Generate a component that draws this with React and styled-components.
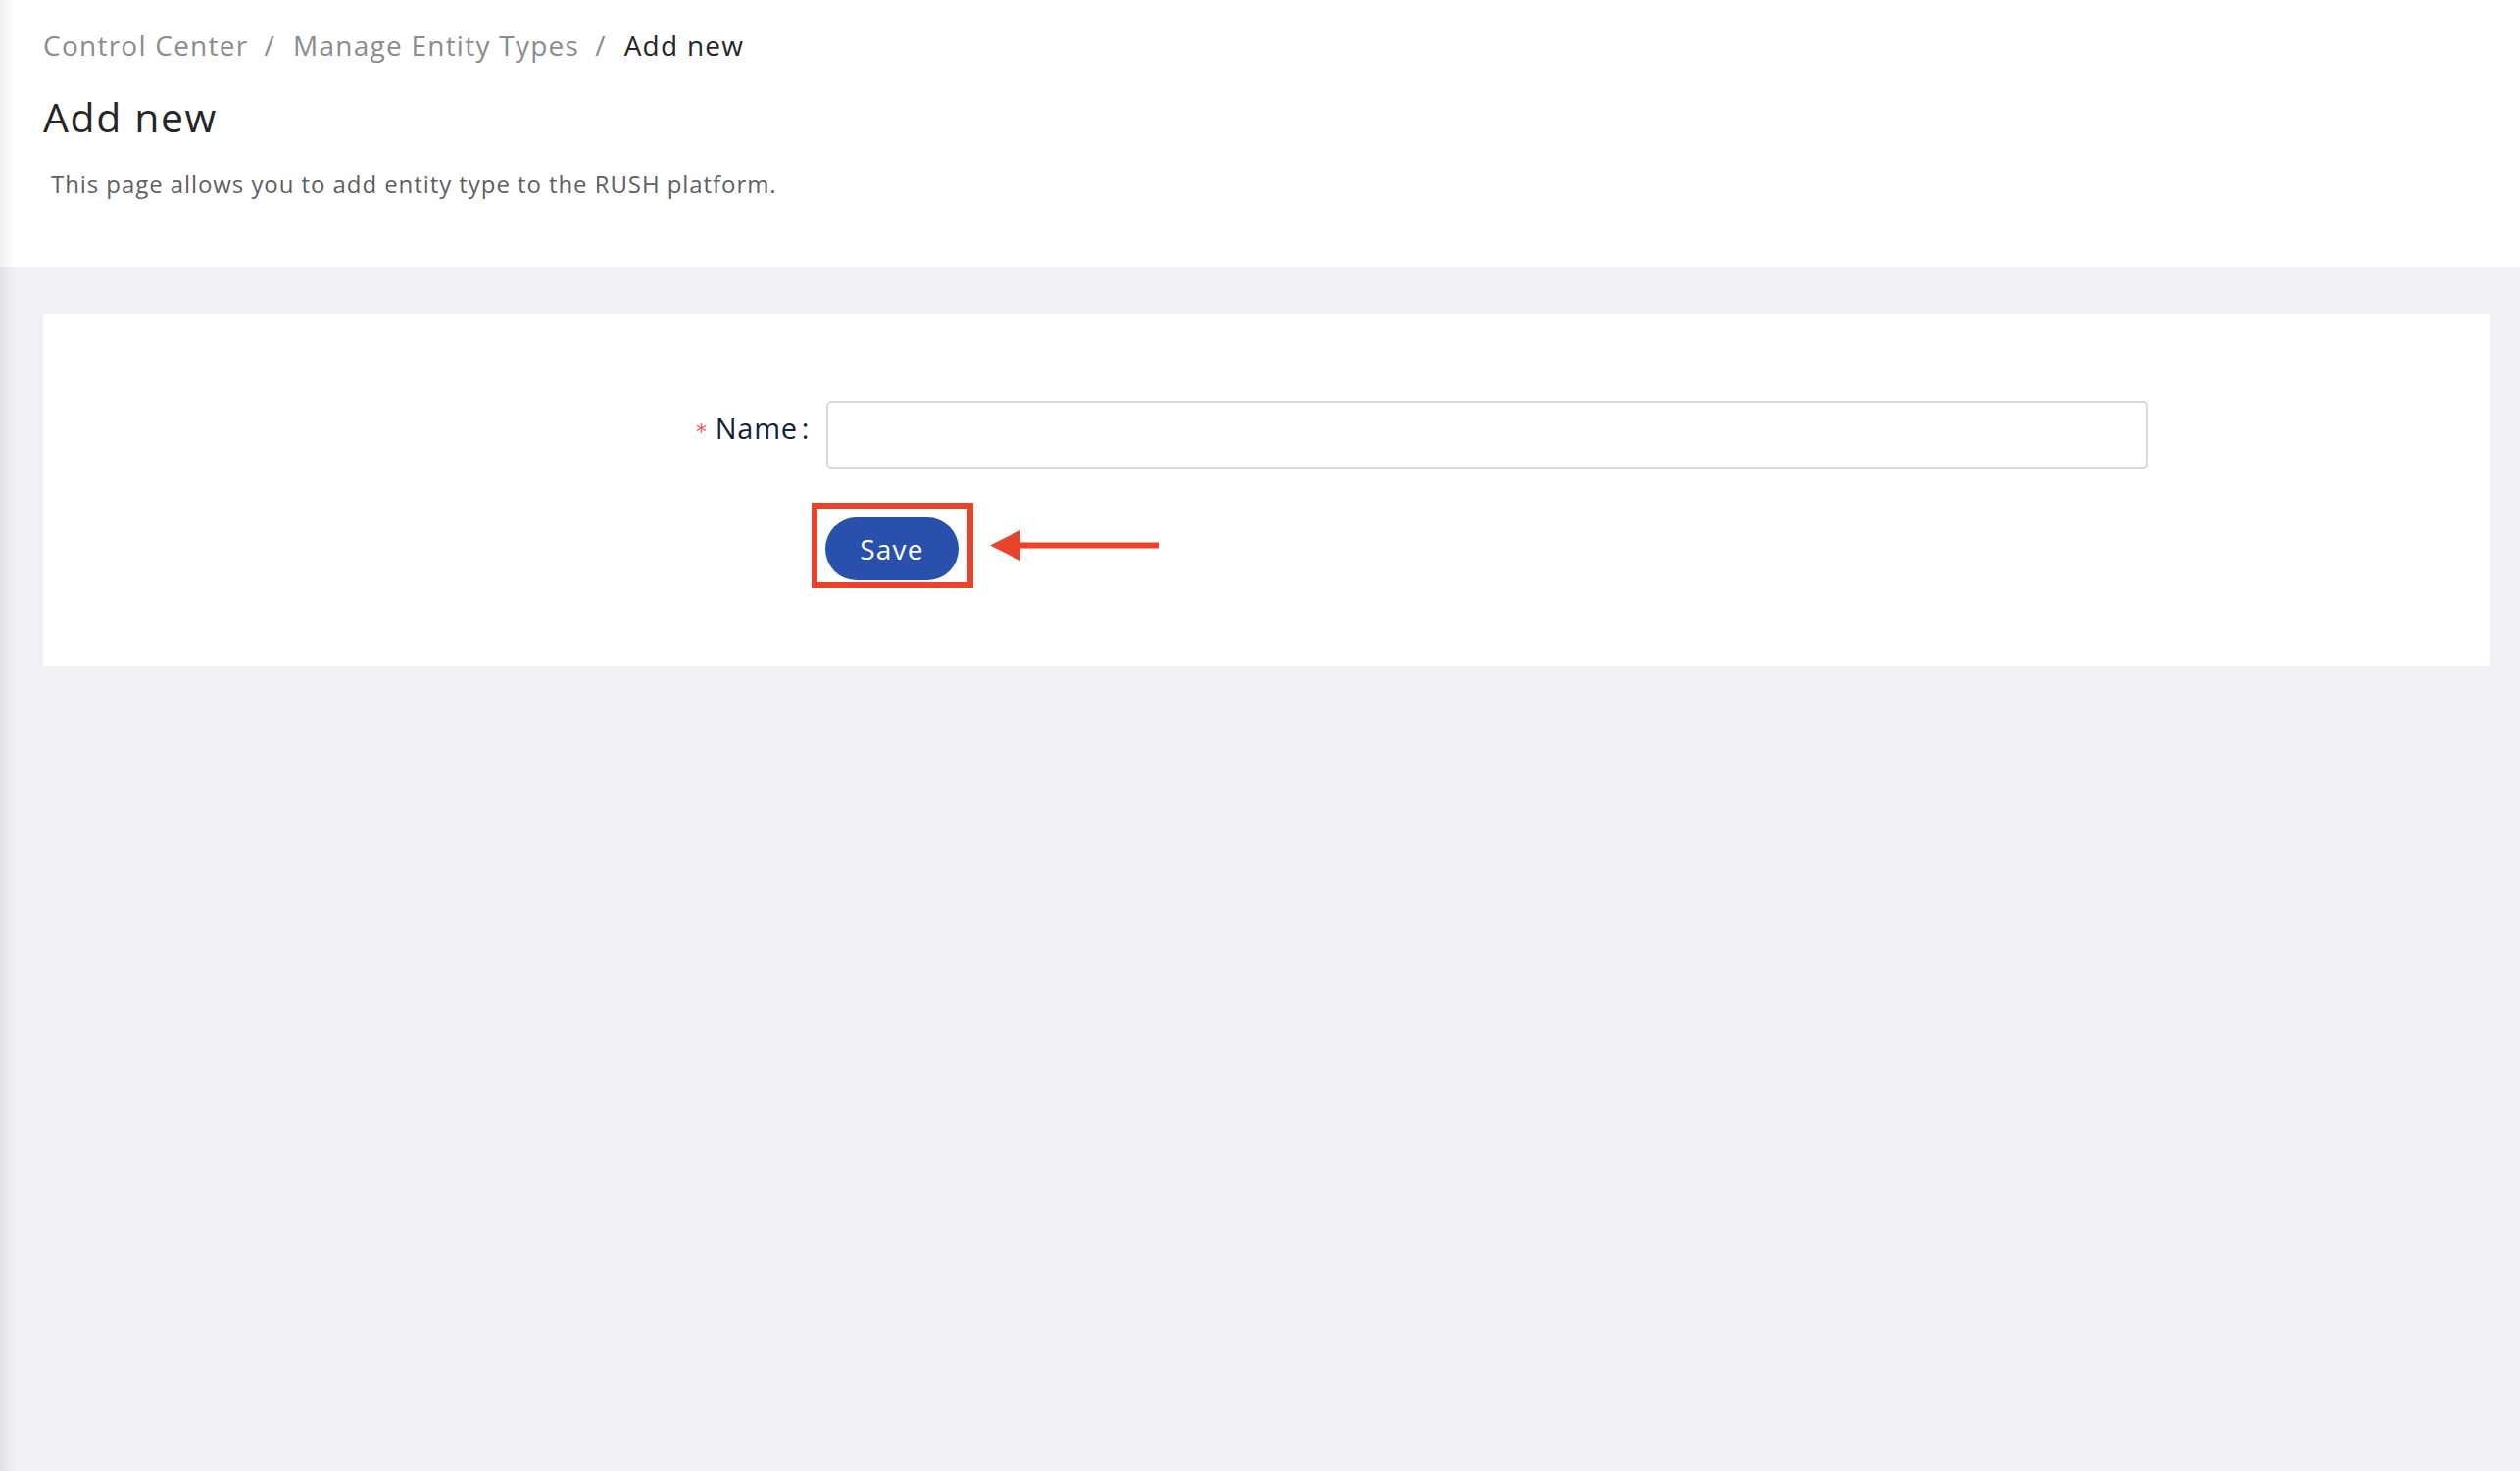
import React from "react";
import styled, { createGlobalStyle } from "styled-components";

const GlobalStyle = createGlobalStyle`
  html, body {
    margin: 0;
    padding: 0;
    background: #f0f1f5;
    font-family: "Open Sans", "Liberation Sans", sans-serif;
  }
  * { box-sizing: border-box; }
`;

const Page = styled.div`
  position: relative;
  min-height: 100vh;
  display: flex;
  flex-direction: column;
  background: #f0f1f5;

  &::after {
    content: "";
    position: absolute;
    left: 0;
    top: 0;
    bottom: 0;
    width: 14px;
    background: linear-gradient(to right, rgba(0, 0, 20, 0.06), rgba(0, 0, 20, 0));
    pointer-events: none;
  }
`;

const Header = styled.header`
  background: #ffffff;
  height: 272px;
  padding: 26px 44px 0 44px;
`;

const Breadcrumb = styled.nav`
  display: flex;
  align-items: center;
  font-size: 28px;
  line-height: 40px;
  letter-spacing: 1.25px;
  color: #8c8c8c;
`;

const Crumb = styled.span`
  color: ${(p) => (p.$current ? "#262626" : "#8c8c8c")};
`;

const Separator = styled.span`
  margin: 0 18px 0 16px;
  color: #8c8c8c;
`;

const Title = styled.h1`
  margin: 25px 0 0 0;
  font-size: 41px;
  line-height: 56px;
  font-weight: 500;
  letter-spacing: 1.6px;
  color: #262626;
`;

const Description = styled.p`
  margin: 24px 0 0 0;
  padding-left: 8px;
  font-size: 24px;
  line-height: 34px;
  letter-spacing: 0.93px;
  color: #5f5f5f;
`;

const Main = styled.main`
  padding: 48px 31px 0 44px;
`;

const Card = styled.section`
  background: #ffffff;
  height: 360px;
  padding-top: 89px;
`;

const FormRow = styled.div`
  display: flex;
  align-items: center;
`;

const Label = styled.label`
  width: 799px;
  padding: 0 17px 10px 0;
  display: flex;
  justify-content: flex-end;
  align-items: baseline;
  font-size: 29px;
  line-height: 40px;
  letter-spacing: 0.7px;
  color: #14213d;
`;

const Required = styled.span`
  color: #ff4d4f;
  font-size: 22px;
  margin-right: 8px;
  font-family: "DejaVu Sans", sans-serif;
`;

const Colon = styled.span`
  margin-left: 4px;
`;

const Input = styled.input`
  width: 1348px;
  height: 70px;
  border: 2px solid #d9d9d9;
  border-radius: 5px;
  background: #fff;
  font-size: 26px;
  padding: 0 18px;
  font-family: inherit;
  outline: none;
`;

const ActionRow = styled.div`
  display: flex;
  align-items: center;
  margin-top: 34px;
  padding-left: 784px;
`;

const Highlight = styled.div`
  border: 6px solid #e9432a;
  padding: 9px 9px 2px 8px;
  display: flex;
`;

const SaveButton = styled.button`
  width: 136px;
  height: 64px;
  border: none;
  border-radius: 32px;
  background: #2a50ad;
  color: #ffffff;
  font-family: inherit;
  font-size: 28px;
  line-height: 1;
  letter-spacing: 1.2px;
  box-shadow: 0 2px 0 rgba(0, 0, 0, 0.04);
  cursor: pointer;
`;

const Arrow = styled.svg`
  margin-left: 17px;
  display: block;
`;

export default function App() {
  return (
    <>
      <GlobalStyle />
      <Page>
        <Header>
          <Breadcrumb>
            <Crumb>Control Center</Crumb>
            <Separator>/</Separator>
            <Crumb>Manage Entity Types</Crumb>
            <Separator>/</Separator>
            <Crumb $current>Add new</Crumb>
          </Breadcrumb>
          <Title>Add new</Title>
          <Description>
            This page allows you to add entity type to the RUSH platform.
          </Description>
        </Header>
        <Main>
          <Card>
            <FormRow>
              <Label htmlFor="name">
                <Required>*</Required>
                Name
                <Colon>:</Colon>
              </Label>
              <Input id="name" type="text" />
            </FormRow>
            <ActionRow>
              <Highlight>
                <SaveButton type="button">Save</SaveButton>
              </Highlight>
              <Arrow width="172" height="31" viewBox="0 0 172 31">
                <polygon points="0,15.5 31,0 31,31" fill="#e9432a" />
                <rect x="30" y="12.5" width="142" height="6" fill="#e9432a" />
              </Arrow>
            </ActionRow>
          </Card>
        </Main>
      </Page>
    </>
  );
}
